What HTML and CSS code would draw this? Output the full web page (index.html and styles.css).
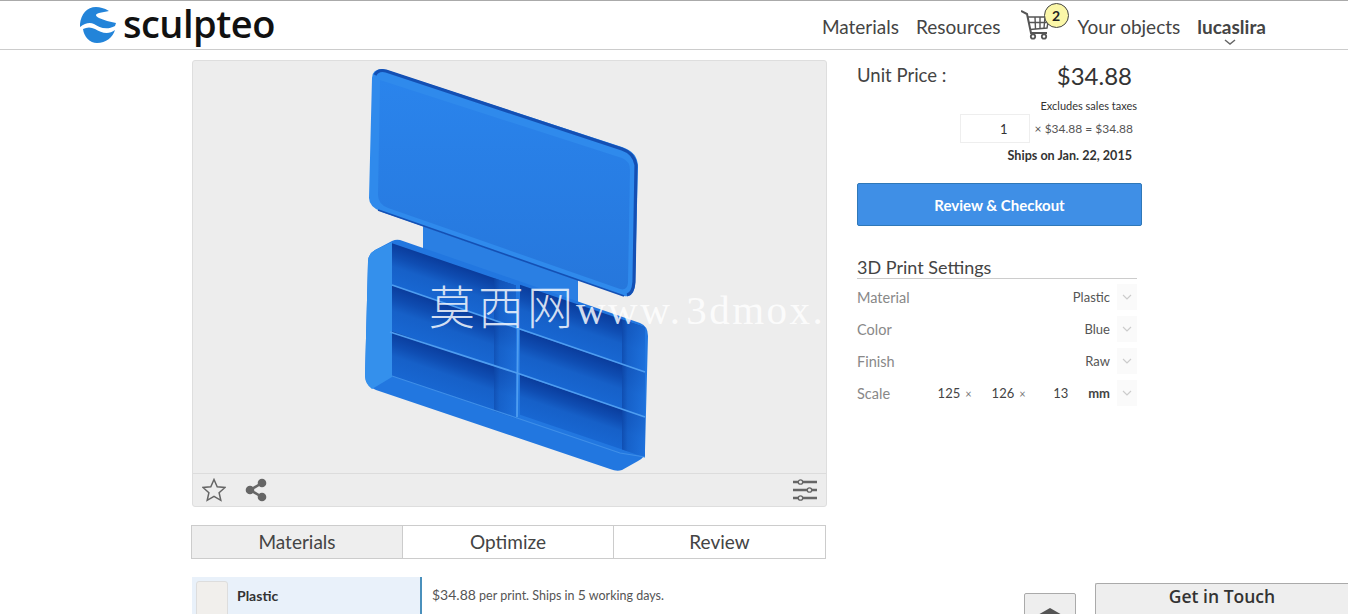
FILE: index.html
```html
<!DOCTYPE html>
<html lang="en">
<head>
  <meta charset="UTF-8" />
  <title>Sculpteo | 3D Print</title>
  <link rel="stylesheet" href="styles.css">
</head>
<body>
  <header class="top-bar">
    <a class="logo">
      <svg class="logo-mark" viewBox="0 0 36 36" width="36" height="36" fill="#2384d9">
        <path d="M29 4C24 1 20 0 16 0C7 0 1 7 0 17L0 20C5 16 10 15 14 17C19 20 26 24 35 19L36 16C30 15 24 13 19 11C15 9 15 7 19 6C22 5 26 5 29 4Z"/>
        <path d="M3 22C7 20 11 20 15 22C21 26 29 28 35 23C33 30 26 36 17 36C10 36 4 30 3 22Z"/>
      </svg>
      <span class="logo-text">sculpteo</span>
    </a>
    <nav class="main-nav">
      <a>Materials</a>
      <a>Resources</a>
      <span class="cart">
        <svg viewBox="0 0 30 30" width="30" height="30" fill="none" stroke="#555" stroke-width="1.4">
          <path d="M0 1L6 4L10 23H26" stroke-width="2"/>
          <path d="M7 7H28L26 18L9 19.500"/>
          <path d="M8 12.500H27M14 7L14.500 19M19 7V18.500M24 7L23 18"/>
          <circle cx="12" cy="26.500" r="2.200" stroke-width="1.800"/>
          <circle cx="23" cy="26.500" r="2.200" stroke-width="1.800"/>
        </svg>
        <span class="cart-count">2</span>
      </span>
      <a>Your objects</a>
      <a class="user">lucaslira
        <svg class="user-arrow" viewBox="0 0 12 6" width="12" height="6"><path d="M1 1L6 5L11 1" fill="none" stroke="#666" stroke-width="1.500"/></svg>
      </a>
    </nav>
  </header>

  <main class="page">
    <section class="left-col">
      <div class="viewer">
        <div class="stage">
          <svg class="model" viewBox="192 60 635 413" width="635" height="413">
            <defs>
              <linearGradient id="cellShade" x1="0" y1="0" x2="0" y2="1">
                <stop offset="0" stop-color="#0a3c9c"/>
                <stop offset="0.3" stop-color="#0f4db2"/>
                <stop offset="0.55" stop-color="#1660c8"/>
                <stop offset="1" stop-color="#1867d2"/>
              </linearGradient>
              <linearGradient id="wallShade" x1="0" y1="0" x2="1" y2="0">
                <stop offset="0" stop-color="#0d47a8"/>
                <stop offset="0.25" stop-color="#1660c8"/>
                <stop offset="1" stop-color="#1f74e0"/>
              </linearGradient>
              <linearGradient id="lidFill" x1="0" y1="0" x2="0" y2="1">
                <stop offset="0" stop-color="#2a84ec"/>
                <stop offset="1" stop-color="#2677dc"/>
              </linearGradient>
            </defs>

            <!-- hinge -->
            <polygon points="423,226 578,280 578,306 423,252" fill="#2a7fe3"/>

            <!-- tray -->
            <path d="M400 240L640 323Q648 326 648 336L645 450Q645 458 638 461L622 470Q617 472 610 469L376 390Q366 386 365 376L368 262Q368 254 375 250L392 241Q396 239 400 240Z" fill="#2277e0"/>
            <path d="M392 242L375 250Q368 254 368 262L365 376Q365 384 372 389L392 377Z" fill="#3490ec"/>

            <!-- compartments, drawn square then sheared onto the tray -->
            <g transform="matrix(1 0.34 0 1 0 0)">
              <rect x="392" y="110" width="124" height="42" fill="url(#cellShade)"/>
              <rect x="392" y="152" width="124" height="46" fill="url(#cellShade)"/>
              <rect x="392" y="198" width="124" height="45" fill="url(#cellShade)"/>
              <rect x="520" y="108" width="125" height="45" fill="url(#cellShade)"/>
              <rect x="520" y="153" width="125" height="45" fill="url(#cellShade)"/>
              <rect x="520" y="198" width="125" height="40" fill="url(#cellShade)"/>
              <rect x="494" y="110" width="22" height="133" fill="url(#wallShade)" opacity="0.6"/>
              <rect x="622" y="108" width="23" height="130" fill="url(#wallShade)" opacity="0.75"/>
            </g>

            <!-- divider edges -->
            <path d="M392 285L517 328L645 372M390 332L517 373L645 417M518 328L517 417" fill="none" stroke="#4e9df0" stroke-width="1.800"/>
            <path d="M392 376L517 418L620 453L645 457" fill="none" stroke="#3f8fe8" stroke-width="1.200"/>

            <!-- lid -->
            <path d="M372 78Q372 69 383 69L622 147Q638 152 638 167L635 283Q634 298 624 296L382 212Q369 207 369 198Z" fill="#2f8aec"/>
            <path d="M380 80L622 158Q630 161 630 170L628 283Q627 291 620 289L388 208Q378 204 378 195Z" fill="url(#lidFill)"/>
            <path d="M375 75Q378 69 386 71L622 149Q634 153 636 165L634 282Q633 294 627 295" fill="none" stroke="#1450b4" stroke-width="3.200"/>
            <path d="M378 210L624 296" fill="none" stroke="#1450b4" stroke-width="1.600"/>
          </svg>
          <div class="watermark"><span class="wm-cjk">莫西网</span>www. 3dmox.</div>
        </div>
        <div class="viewer-tools">
          <svg viewBox="0 0 24 24" width="24" height="24" fill="none" stroke="#666" stroke-width="1.500"><path d="M12 1.500L15.200 8.700L23 9.500L17.100 14.700L18.800 22.300L12 18.300L5.200 22.300L6.900 14.700L1 9.500L8.800 8.700Z"/></svg>
          <svg viewBox="0 0 22 24" width="22" height="24" fill="#666"><circle cx="17" cy="5" r="4.300"/><circle cx="5" cy="12" r="4.300"/><circle cx="17" cy="19" r="4.300"/><path d="M5 12L17 5M5 12L17 19" stroke="#666" stroke-width="2.600"/></svg>
          <svg class="tools-right" viewBox="0 0 26 22" width="26" height="22" fill="none" stroke="#666" stroke-width="2.400">
            <path d="M1 3H6M11 3H25M1 11H15M20 11H25M1 19H6M11 19H25"/>
            <circle cx="8.500" cy="3" r="2.200" stroke-width="1.300"/><circle cx="17.500" cy="11" r="2.200" stroke-width="1.300"/><circle cx="8.500" cy="19" r="2.200" stroke-width="1.300"/>
          </svg>
        </div>
      </div>

      <div class="tabs">
        <a class="tab active">Materials</a>
        <a class="tab">Optimize</a>
        <a class="tab">Review</a>
      </div>

      <div class="material-row">
        <div class="material-name">
          <span class="swatch"></span>
          <b>Plastic</b>
        </div>
        <div class="material-info"><span class="info-price">$34.88</span> per print. Ships in <span class="info-price">5</span> working days.</div>
      </div>
    </section>

    <aside class="right-col">
      <div class="unit-price">
        <span>Unit Price :</span>
        <span class="price">$34.88</span>
      </div>
      <div class="taxes">Excludes sales taxes</div>
      <div class="qty-row">
        <input class="qty" type="text" value="1">
        <span>× $34.88 = $34.88</span>
      </div>
      <div class="ships">Ships on Jan. 22, 2015</div>
      <button class="checkout">Review &amp; Checkout</button>

      <h2 class="settings-title">3D Print Settings</h2>
      <div class="setting">
        <span class="setting-label">Material</span>
        <span class="setting-value">Plastic</span>
        <span class="select-arrow"><svg viewBox="0 0 10 6" width="10" height="6"><path d="M1 1L5 5L9 1"/></svg></span>
      </div>
      <div class="setting">
        <span class="setting-label">Color</span>
        <span class="setting-value">Blue</span>
        <span class="select-arrow"><svg viewBox="0 0 10 6" width="10" height="6"><path d="M1 1L5 5L9 1"/></svg></span>
      </div>
      <div class="setting">
        <span class="setting-label">Finish</span>
        <span class="setting-value">Raw</span>
        <span class="select-arrow"><svg viewBox="0 0 10 6" width="10" height="6"><path d="M1 1L5 5L9 1"/></svg></span>
      </div>
      <div class="setting">
        <span class="setting-label">Scale</span>
        <span class="scale">
          <span class="dim">125</span><i>×</i>
          <span class="dim">126</span><i>×</i>
          <span class="dim dim-last">13</span>
          <b>mm</b>
        </span>
        <span class="select-arrow"><svg viewBox="0 0 10 6" width="10" height="6"><path d="M1 1L5 5L9 1"/></svg></span>
      </div>
    </aside>
  </main>

  <a class="back-top"><svg viewBox="0 0 28 10" width="28" height="10"><path d="M14 0L28 8V10H0V8Z" fill="#555"/></svg></a>
  <div class="get-in-touch">Get in Touch</div>
</body>
</html>
```

FILE: styles.css
```css
* {
  margin: 0;
  padding: 0;
  box-sizing: border-box;
}

html, body {
  height: 100%;
  overflow: hidden;
}

body {
  background: #fff;
  color: #333;
  font-family: 'Lato', 'Open Sans', sans-serif;
}

.top-bar {
  display: flex;
  align-items: center;
  height: 50px;
  padding: 0 82px 0 80px;
  border-top: 1px solid #aaa;
  border-bottom: 1px solid #ccc;
}

.logo {
  display: flex;
  align-items: center;
  gap: 7px;
}

.logo-text {
  margin-top: -5px;
  font-family: 'Open Sans', sans-serif;
  font-weight: 600;
  font-size: 38px;
  line-height: 44px;
  color: #111;
  letter-spacing: -0.5px;
}

.main-nav {
  display: flex;
  align-items: center;
  gap: 17px;
  margin-left: auto;
  padding-top: 2px;
  font-size: 19px;
  color: #444;
}

.cart {
  position: relative;
  width: 40px;
  height: 30px;
  margin: -3px 0 0 3px;
}

.cart-count {
  position: absolute;
  left: 23px;
  top: -7px;
  width: 25px;
  height: 25px;
  border: 1px solid #444;
  border-radius: 50%;
  background: #fbf7a8;
  color: #222;
  font-size: 14px;
  font-weight: 700;
  line-height: 23px;
  text-align: center;
}

.user {
  position: relative;
  font-weight: 700;
}

.user-arrow {
  position: absolute;
  left: 27px;
  top: 24px;
}

.page {
  display: flex;
  gap: 30px;
  padding: 10px 0 0 192px;
}

.left-col {
  width: 635px;
}

.viewer {
  border: 1px solid #dedede;
  border-radius: 3px;
  background: #ededed;
  overflow: hidden;
}

.stage {
  position: relative;
  height: 413px;
}

.model {
  display: block;
  margin: -1px 0 0 -1px;
}

.watermark {
  position: absolute;
  left: 236px;
  top: 211px;
  white-space: nowrap;
  color: rgba(255, 255, 255, 0.82);
  font-family: 'Liberation Serif', serif;
  font-size: 41px;
  letter-spacing: 2.5px;
  word-spacing: -9px;
}

.wm-cjk {
  font-family: 'Noto Sans CJK SC', sans-serif;
  font-size: 46px;
  font-weight: 300;
  letter-spacing: 3px;
}

.viewer-tools {
  display: flex;
  align-items: center;
  gap: 19px;
  height: 33px;
  padding: 0 8px 0 9px;
  border-top: 1px solid #dcdcdc;
}

.tools-right {
  margin-left: auto;
}

.tabs {
  display: grid;
  grid-template-columns: 210px 211px 1fr;
  margin: 18px 1px 18px -1px;
  border: 1px solid #ccc;
}

.tab {
  height: 32px;
  font-size: 19px;
  line-height: 32px;
  text-align: center;
  color: #444;
  border-left: 1px solid #ccc;
}

.tab:first-child {
  border-left: none;
}

.tab.active {
  background: #eee;
}

.material-row {
  display: flex;
  height: 50px;
  font-size: 12.5px;
}

.material-name {
  display: flex;
  align-items: flex-start;
  gap: 9px;
  width: 230px;
  padding: 4px;
  background: #e9f1fa;
  border-right: 2px solid #4a90bc;
}

.material-name b {
  font-size: 14px;
  line-height: 30px;
}

.swatch {
  width: 32px;
  height: 42px;
  background: #f1efec;
  border: 1px solid #ddd;
  border-radius: 3px;
}

.material-info {
  padding: 9px 0 0 10px;
  color: #555;
}

.info-price {
  font-size: 14px;
}

.right-col {
  width: 285px;
}

.unit-price {
  display: flex;
  justify-content: space-between;
  align-items: center;
  height: 30px;
  padding-right: 10px;
  font-size: 18.5px;
  color: #444;
}

.price {
  font-size: 24px;
  color: #333;
}

.taxes {
  margin: 9px 5px 0 0;
  font-size: 11px;
  line-height: 14px;
  text-align: right;
}

.qty-row {
  display: flex;
  justify-content: flex-end;
  align-items: center;
  gap: 5px;
  padding-right: 9px;
  margin-top: 1px;
  font-size: 12px;
  color: #555;
}

.qty {
  width: 70px;
  height: 29px;
  padding-right: 21px;
  border: 1px solid #eee;
  background: #fff;
  color: #333;
  font: 13px 'Lato', sans-serif;
  text-align: right;
  outline: none;
}

.ships {
  margin: 6px 10px 0 0;
  font-size: 12.6px;
  font-weight: 700;
  line-height: 14px;
  text-align: right;
}

.checkout {
  display: block;
  width: 285px;
  height: 43px;
  margin-top: 20px;
  border: 1px solid #2f78b8;
  border-radius: 2px;
  background: #3f8fe6;
  color: #fff;
  font: 700 15px 'Lato', sans-serif;
}

.settings-title {
  width: 280px;
  margin-top: 31px;
  margin-bottom: 2px;
  border-bottom: 1px solid #ccc;
  font-size: 18px;
  font-weight: 400;
  line-height: 21px;
  color: #444;
}

.setting {
  display: flex;
  align-items: center;
  width: 280px;
  height: 32px;
  font-size: 13px;
  color: #555;
}

.setting-label {
  margin-right: auto;
  font-size: 14.5px;
  color: #888;
}

.select-arrow {
  display: flex;
  align-items: center;
  justify-content: center;
  width: 20px;
  height: 26px;
  margin-left: 7px;
  background: #fafafa;
}

.select-arrow path {
  fill: none;
  stroke: #ccc;
  stroke-width: 1.2;
}

.scale {
  display: flex;
  align-items: center;
  color: #444;
}

.dim {
  width: 24px;
  text-align: right;
}

.scale i {
  width: 30px;
  padding-left: 5px;
  font-style: normal;
  font-size: 11px;
  color: #777;
}

.dim-last {
  margin-right: 20px;
}

.back-top {
  position: fixed;
  left: 1024px;
  bottom: -4px;
  display: flex;
  justify-content: center;
  align-items: flex-start;
  width: 52px;
  height: 25px;
  padding-top: 14px;
  background: #eee;
  border: 1px solid #aaa;
  border-radius: 2px;
}

.get-in-touch {
  position: fixed;
  left: 1095px;
  bottom: -6px;
  width: 253px;
  height: 37px;
  background: #eee;
  border: 1px solid #aaa;
  border-right: none;
  border-radius: 2px 0 0 0;
  font-family: 'Open Sans', sans-serif;
  font-size: 17.5px;
  font-weight: 600;
  line-height: 24px;
  text-align: center;
  color: #333;
}
```
